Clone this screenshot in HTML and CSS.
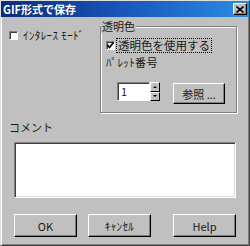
FILE: index.html
```html
<!DOCTYPE html>
<html lang="ja">
<head>
    <meta charset="UTF-8" />
    <meta name="viewport" content="width=device-width, initial-scale=1.0" />
    <title>GIF形式で保存</title>
    <link rel="stylesheet" href="styles.css">
</head>
<body>

    <div class="dialog">
        <div class="titlebar">
            <span class="title">GIF形式で保存</span>
            <span class="close-btn">
                <svg width="8" height="7" viewBox="0 0 8 7"><path d="M0.5 0.5 L7.5 6.5 M7.5 0.5 L0.5 6.5" stroke="#000" stroke-width="1.6"/></svg>
            </span>
        </div>

        <div class="content">
            <div class="top-row">
                <label class="check interlace">
                    <span class="box"></span>
                    <span class="hankaku">ｲﾝﾀﾚｰｽ ﾓｰﾄﾞ</span>
                </label>

                <fieldset class="group">
                    <legend>透明色</legend>
                    <label class="check use-trans">
                        <span class="box">
                            <svg width="7" height="7" viewBox="0 0 7 7"><path d="M0.5 3 L2.5 5.5 L6.5 0.5" fill="none" stroke="#000" stroke-width="1.7"/></svg>
                        </span>
                        <span class="focus-text">透明色を使用する</span>
                    </label>
                    <div class="pal-label hankaku">ﾊﾟﾚｯﾄ番号</div>
                    <div class="pal-row">
                        <div class="spin">
                            <span class="spin-input">1</span>
                            <span class="spin-btns">
                                <span class="spin-btn"><span class="tri-up"></span></span>
                                <span class="spin-btn"><span class="tri-down"></span></span>
                            </span>
                        </div>
                        <button class="btn ref-btn">参照 ...</button>
                    </div>
                </fieldset>
            </div>

            <div class="comment-label">コメント</div>
            <div class="comment-box"></div>

            <div class="buttons">
                <button class="btn">OK</button>
                <button class="btn hankaku">ｷｬﾝｾﾙ</button>
                <button class="btn help">Help</button>
            </div>
        </div>
    </div>

</body>
</html>
```

FILE: styles.css
```css
body {
    margin: 0;
    font-family: "Noto Sans CJK JP", "DejaVu Sans", sans-serif;
    font-size: 11px;
    color: #1a1a1a;
}
.dialog {
    width: 250px;
    height: 246px;
    box-sizing: border-box;
    background: #c0c0c0;
    border: 1px solid;
    border-color: #dfdfdf #404040 #404040 #dfdfdf;
    box-shadow: inset 1px 1px 0 #fff, inset -1px -1px 0 #808080;
}
.titlebar {
    height: 16px;
    display: flex;
    align-items: center;
    justify-content: space-between;
    padding: 0 2px;
    background: linear-gradient(90deg, #0c2a7a, #1a5cc0 55%, #2a8ee0);
}
.title {
    color: #fff;
    font-weight: bold;
    line-height: 14px;
}
.close-btn {
    width: 12px;
    height: 10px;
    display: flex;
    align-items: center;
    justify-content: center;
    background: #c0c0c0;
    border: 1px solid;
    border-color: #fff #000 #000 #fff;
    box-shadow: inset -1px -1px 0 #808080;
}
.content {
    padding: 0 12px 0 8px;
}
.hankaku {
    letter-spacing: 0.4px;
}
.top-row {
    display: flex;
    margin-top: 3px;
}
.check {
    display: flex;
    align-items: center;
    height: 14px;
}
.box {
    width: 9px;
    height: 9px;
    box-sizing: border-box;
    background: #fff;
    border: 1px solid;
    border-color: #808080 #fff #fff #808080;
    box-shadow: inset 1px 1px 0 #404040;
    display: flex;
    align-items: center;
    justify-content: center;
}
.interlace {
    width: 91px;
    margin-top: 8px;
    align-self: flex-start;
}
.interlace .box {
    margin-right: 5px;
}
.group {
    width: 137px;
    height: 93px;
    box-sizing: border-box;
    margin: 0;
    padding: 0 0 0 5px;
    border: 1px solid #808080;
    box-shadow: inset 1px 1px 0 #fff, 1px 1px 0 #fff;
}
.group legend {
    padding: 0 1px;
    margin-left: -5px;
    line-height: 13px;
    background: #c0c0c0;
}
.use-trans {
    height: 16px;
    margin-top: 4px;
}
.use-trans .box {
    margin-right: 1px;
}
.focus-text {
    border: 1px dotted #000;
    padding: 0 1px;
    line-height: 13px;
    font-size: 11.5px;
}
.pal-label {
    margin-top: 3px;
    line-height: 13px;
}
.pal-row {
    display: flex;
    align-items: flex-start;
    margin-top: 13px;
    padding-left: 11px;
}
.spin {
    display: flex;
    height: 19px;
}
.spin-input {
    width: 33px;
    height: 19px;
    box-sizing: border-box;
    background: #fff;
    border: 1px solid;
    border-color: #808080 #fff #fff #808080;
    box-shadow: inset 1px 1px 0 #404040;
    padding-left: 3px;
    line-height: 16px;
}
.spin-btns {
    display: flex;
    flex-direction: column;
    width: 10px;
}
.spin-btn {
    flex: 1;
    box-sizing: border-box;
    background: #c0c0c0;
    border: 1px solid;
    border-color: #fff #000 #000 #fff;
    display: flex;
    align-items: center;
    justify-content: center;
}
.tri-up {
    border-left: 2px solid transparent;
    border-right: 2px solid transparent;
    border-bottom: 2px solid #000;
}
.tri-down {
    border-left: 2px solid transparent;
    border-right: 2px solid transparent;
    border-top: 2px solid #000;
}
.btn {
    font-family: inherit;
    font-size: 11px;
    color: #1a1a1a;
    background: #c0c0c0;
    border: 1px solid;
    border-color: #fff #000 #000 #fff;
    box-shadow: inset -1px -1px 0 #808080;
    padding: 0;
}
.ref-btn {
    width: 52px;
    height: 21px;
    margin: 1px 0 0 13px;
}
.comment-label {
    margin-top: 8px;
    line-height: 13px;
}
.comment-box {
    width: 222px;
    height: 56px;
    box-sizing: border-box;
    margin: 8px 0 0 5px;
    background: #fff;
    border: 1px solid;
    border-color: #808080 #fff #fff #808080;
    box-shadow: inset 1px 1px 0 #404040, inset -1px -1px 0 #dfdfdf;
}
.buttons {
    display: flex;
    margin: 16px 0 0 5px;
    gap: 11px;
}
.buttons .btn {
    width: 63px;
    height: 23px;
}
.buttons .help {
    margin-left: 11px;
}
```
